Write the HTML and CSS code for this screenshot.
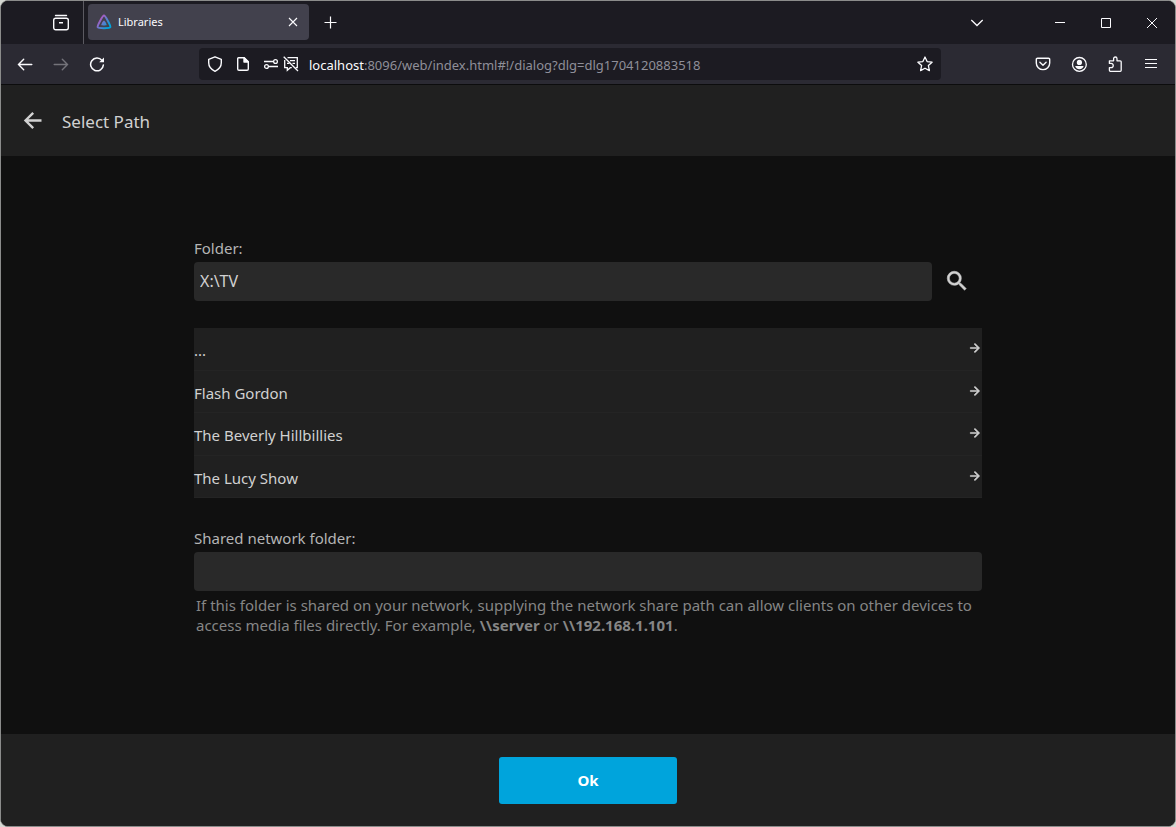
FILE: index.html
```html
<!DOCTYPE html>
<html lang="en">
<head>
<meta charset="utf-8">
<title>Libraries</title>
<link rel="stylesheet" href="styles.css">
</head>
<body>
<div class="window">
  <div class="tabbar">
    <button class="icon-btn firefox-view" aria-label="Recent browsing"><svg width="18" height="18" viewBox="0 0 18 18" fill="none" stroke="currentColor" stroke-width="1.4"><path d="M3.5 1.5h11" stroke-linecap="round"/><rect x="1.7" y="4.2" width="14.6" height="11.6" rx="2"/><path d="M7 8.700h4"/></svg></button>
    <div class="tab">
      <svg width="16" height="16" viewBox="0 0 16 16"><defs><linearGradient id="jelly" x1="4" y1="5" x2="13" y2="12" gradientUnits="userSpaceOnUse"><stop offset="0" stop-color="#aa5cc3"/><stop offset="1" stop-color="#00a4dc"/></linearGradient></defs><path d="M8 1.6C6.700 1.6 1 11.900 1.700 13.200c.6 1.300 12 1.300 12.600 0C15 11.900 9.300 1.600 8 1.600z" fill="none" stroke="url(#jelly)" stroke-width="2"/><path d="M8 6.500c-.8 0-3 4-2.700 4.600.3.600 5.100.600 5.400 0C11 10.500 8.800 6.500 8 6.500z" fill="url(#jelly)"/></svg>
      <span class="tab-title">Libraries</span>
      <button class="icon-btn" aria-label="Close tab"><svg width="10" height="10" viewBox="0 0 10 10" fill="none" stroke="currentColor" stroke-width="1.1"><path d="M1 1l8 8M9 1L1 9"/></svg></button>
    </div>
    <button class="icon-btn new-tab" aria-label="New tab"><svg width="13" height="13" viewBox="0 0 13 13" fill="none" stroke="currentColor" stroke-width="1.2"><path d="M6.500 .5v12M.5 6.500h12"/></svg></button>
    <div class="window-controls">
      <button class="icon-btn all-tabs" aria-label="List all tabs"><svg width="14" height="14" viewBox="0 0 14 14" fill="none" stroke="currentColor" stroke-width="1.3"><path d="M1.300 4L7 9.500 12.700 4"/></svg></button>
      <button class="icon-btn caption" aria-label="Minimize"><svg width="10" height="10" viewBox="0 0 10 10"><path d="M0 4h10v1H0z" fill="currentColor"/></svg></button>
      <button class="icon-btn caption" aria-label="Maximize"><svg width="10" height="10" viewBox="0 0 10 10"><path d="M.5.5h9v9h-9z" fill="none" stroke="currentColor"/></svg></button>
      <button class="icon-btn caption" aria-label="Close"><svg width="10" height="10" viewBox="0 0 10 10" fill="none" stroke="currentColor"><path d="M0 0l10 10M10 0L0 10"/></svg></button>
    </div>
  </div>

  <div class="navbar">
    <div class="nav-buttons">
      <button class="icon-btn" aria-label="Back"><svg width="16" height="16" viewBox="0 0 16 16" fill="none" stroke="currentColor" stroke-width="1.4" stroke-linecap="round"><path d="M14.800 8.500H1.500M6.700 3.300L1.500 8.500l5.200 5.200"/></svg></button>
      <button class="icon-btn" aria-label="Forward" disabled><svg width="16" height="16" viewBox="0 0 16 16" fill="none" stroke="currentColor" stroke-width="1.400" stroke-linecap="round"><path d="M1.200 8.500h13.300M9.300 3.300l5.200 5.200-5.200 5.200"/></svg></button>
      <button class="icon-btn" aria-label="Reload"><svg width="16" height="16" viewBox="0 0 16 16" fill="none" stroke="currentColor" stroke-width="1.500" stroke-linecap="round"><path d="M13 4.400a6.400 6.400 0 1 0 1.400 4.500"/><path d="M15 1.400v4.800h-4.800z" fill="currentColor" stroke="none"/></svg></button>
    </div>
    <div class="urlbar">
      <button class="icon-btn shield" aria-label="Tracking protection"><svg width="16" height="16" viewBox="0 0 16 16" fill="none" stroke="currentColor" stroke-width="1.400" stroke-linejoin="round"><path d="M8 .8l6.300 2.500v3.500c0 3.600-2.600 6.800-6.300 8.500-3.700-1.700-6.300-4.900-6.300-8.500V3.300z"/></svg></button>
      <button class="icon-btn page-info" aria-label="Site information"><svg width="16" height="16" viewBox="0 0 16 16" fill="none" stroke="currentColor" stroke-width="1.400" stroke-linejoin="round"><path d="M3.500 1.700h5.800l4 4v7.300a1.300 1.300 0 0 1-1.300 1.300H4A1.300 1.300 0 0 1 2.700 13V2.500a.8.8 0 0 1 .8-.8z"/><path d="M9 1.700V6h4.300z" fill="currentColor"/></svg></button>
      <button class="icon-btn permissions" aria-label="Permissions"><svg width="16" height="16" viewBox="0 0 16 16" fill="none" stroke="currentColor" stroke-width="1.300"><path d="M1 5.500h9M6 10.500h9"/><circle cx="12.500" cy="5.500" r="1.900"/><circle cx="3.500" cy="10.500" r="1.900"/></svg></button>
      <button class="icon-btn" aria-label="Notifications blocked"><svg width="16" height="16" viewBox="0 0 16 16" fill="none" stroke="currentColor" stroke-width="1.300"><path d="M4.500 1.700h9.800v10h-1.600M1.700 4v7.700h2.600v2.600l3-2.600h1.500M7 4.700h5M9.500 7.300H12M4 7.300h2.500"/><path d="M.7.7L15 15"/></svg></button>
      <div class="url"><span class="host">localhost</span>:8096/web/index.html#!/dialog?dlg=dlg1704120883518</div>
      <button class="icon-btn" aria-label="Bookmark this page"><svg width="16" height="16" viewBox="0 0 16 16" fill="none" stroke="currentColor" stroke-width="1.300" stroke-linejoin="round"><path d="M8 1l2.100 4.600 5 .6-3.700 3.400 1 5L8 12.200l-4.400 2.400 1-5L.9 6.200l5-.6z"/></svg></button>
    </div>
    <div class="toolbar-end">
      <button class="icon-btn" aria-label="Pocket"><svg width="16" height="16" viewBox="0 0 16 16" fill="none" stroke="currentColor" stroke-width="1.400" stroke-linecap="round" stroke-linejoin="round"><path d="M2.500 2.200h11a1.200 1.200 0 0 1 1.200 1.200v3.500a6.700 6.700 0 0 1-13.400 0V3.400a1.200 1.200 0 0 1 1.200-1.200zM4.900 6.300L8 9.300l3.100-3"/></svg></button>
      <button class="icon-btn" aria-label="Account"><svg width="16" height="16" viewBox="0 0 16 16"><circle cx="8.400" cy="8.400" r="6.900" fill="none" stroke="currentColor" stroke-width="1.300"/><circle cx="8.400" cy="6.400" r="2.600" fill="currentColor"/><path d="M4.200 10h8.400c-.3 1.900-2 3.200-4.200 3.200s-3.900-1.300-4.200-3.200z" fill="currentColor"/></svg></button>
      <button class="icon-btn" aria-label="Extensions"><svg width="16" height="16" viewBox="0 0 16 16" fill="none" stroke="currentColor" stroke-width="1.300" stroke-linejoin="round"><path d="M2.400 7.400V4.800h4.200V2.700a1.700 1.700 0 0 1 3.400 0v2.100h3.200a1 1 0 0 1 1 1v8.500a1 1 0 0 1-1 1H3.400a1 1 0 0 1-1-1v-2.600h1.700a2.100 2.100 0 0 0 0-4.300z"/></svg></button>
      <button class="icon-btn" aria-label="Menu"><svg width="16" height="16" viewBox="0 0 16 16" fill="none" stroke="currentColor" stroke-width="1.200"><path d="M2 3.500h12M2 7.500h12M2 11.500h12"/></svg></button>
    </div>
  </div>

  <header class="dialog-header">
    <button class="icon-btn back" aria-label="Back"><svg width="24" height="24" viewBox="0 0 24 24" fill="none" stroke="currentColor" stroke-width="2.400"><path d="M20.500 11.500H5M12.200 3.800L4.500 11.500l7.700 7.700"/></svg></button>
    <h1>Select Path</h1>
  </header>

  <main class="dialog-content">
    <form class="path-form" id="path-form">
      <label for="folder">Folder:</label>
      <div class="folder-row">
        <input type="text" id="folder" value="X:\TV">
        <button type="button" class="icon-btn search" aria-label="Refresh"><svg width="26" height="26" viewBox="0 0 24 24" fill="currentColor" stroke="currentColor" stroke-width=".5"><path d="M15.500 14h-.79l-.28-.27A6.471 6.471 0 0 0 16 9.500 6.500 6.500 0 1 0 9.500 16c1.610 0 3.090-.59 4.230-1.570l.27.28v.79l5 4.990L20.490 19l-4.990-5zm-6 0C7.010 14 5 11.990 5 9.500S7.010 5 9.500 5 14 7.010 14 9.500 11.990 14 9.500 14z"/></svg></button>
      </div>
      <div class="folder-list">
        <button type="button" class="folder-item"><span>...</span><svg class="arrow" width="14" height="14" viewBox="0 0 24 24"><path d="M12 4l-1.410 1.410L16.170 11H4v2h12.170l-5.580 5.590L12 20l8-8z"/></svg></button>
        <button type="button" class="folder-item"><span>Flash Gordon</span><svg class="arrow" width="14" height="14" viewBox="0 0 24 24"><path d="M12 4l-1.410 1.410L16.170 11H4v2h12.170l-5.580 5.590L12 20l8-8z"/></svg></button>
        <button type="button" class="folder-item"><span>The Beverly Hillbillies</span><svg class="arrow" width="14" height="14" viewBox="0 0 24 24"><path d="M12 4l-1.410 1.410L16.170 11H4v2h12.170l-5.580 5.590L12 20l8-8z"/></svg></button>
        <button type="button" class="folder-item"><span>The Lucy Show</span><svg class="arrow" width="14" height="14" viewBox="0 0 24 24"><path d="M12 4l-1.410 1.410L16.170 11H4v2h12.170l-5.580 5.590L12 20l8-8z"/></svg></button>
      </div>
      <label for="network">Shared network folder:</label>
      <input type="text" id="network" aria-describedby="network-help">
      <p class="help" id="network-help">If this folder is shared on your network, supplying the network share path can allow clients on other devices to access media files directly. For example, <b>\\server</b> or <b>\\192.168.1.101</b>.</p>
    </form>
  </main>

  <footer class="dialog-footer">
    <button type="submit" form="path-form" class="submit">Ok</button>
  </footer>
</div>
</body>
</html>
```
FILE: styles.css
```css
* { box-sizing: border-box; }
body {
  margin: 0;
  background: #d5d8d2;
  color: #d1d1d1;
  font-family: "Noto Sans", sans-serif;
  font-size: 15px;
}
button, input { font: inherit; color: inherit; }
button { border: 0; background: none; padding: 0; }
svg { display: block; flex: none; }

.window {
  display: flex;
  flex-direction: column;
  min-height: 100vh;
  border: 1px solid #8b8c8b;
  border-radius: 8px;
  background: #101010;
  overflow: hidden;
}
.icon-btn {
  display: flex;
  align-items: center;
  justify-content: center;
  flex: none;
}

.tabbar {
  display: flex;
  align-items: center;
  height: 43px;
  background: #1c1b22;
  color: #fbfbfe;
}
.firefox-view {
  width: 83px;
  height: 100%;
  padding-left: 38px;
  border-right: 1px solid #5b5a61;
}
.tab {
  display: flex;
  align-items: center;
  gap: 6px;
  width: 221px;
  height: 36px;
  margin-left: 4px;
  margin-bottom: 2px;
  padding: 0 11px 0 8px;
  border-radius: 4px;
  background: #42414d;
}
.tab-title { flex: 1; font: 11px "Noto Sans", sans-serif; }
.new-tab { margin-left: 15px; }
.window-controls { display: flex; margin-left: auto; }
.all-tabs { width: 60px; }
.caption { width: 46px; height: 30px; }
.all-tabs + .caption { margin-left: 30px; }

.navbar {
  display: flex;
  align-items: center;
  height: 41px;
  padding-right: 16px;
  border-bottom: 1px solid #0c0c0d;
  background: #2b2a33;
  color: #fbfbfe;
}
.nav-buttons { display: flex; gap: 20px; width: 198px; padding-left: 16px; flex: none; }
.nav-buttons button:disabled { color: #74737a; }
.urlbar {
  display: flex;
  align-items: center;
  flex: 1;
  max-width: 742px;
  height: 32px;
  padding: 0 8px;
  border-radius: 4px;
  background: #1c1b22;
}
.page-info { margin-left: 12px; }
.permissions { margin-left: 12px; margin-right: 4px; }
.url {
  flex: 1;
  margin-left: 10px;
  padding-top: 1px;
  color: #8f8f99;
  font: 13px "Noto Sans", sans-serif;
  white-space: nowrap;
}
.host { color: #fbfbfe; }
.toolbar-end { display: flex; gap: 20px; margin-left: auto; }

.dialog-header {
  display: flex;
  align-items: center;
  gap: 17px;
  height: 71px;
  padding-left: 20px;
  background: #202020;
}
.dialog-header h1 { margin: 0; padding-top: 2px; font-size: 17px; font-weight: 400; }

.dialog-content { flex: 1; padding: 82px 24px 24px; }
.path-form {
  display: flex;
  flex-direction: column;
  max-width: 788px;
  margin: 0 auto;
}
.path-form label { line-height: 20px; margin-bottom: 4px; color: #b5b5b5; }
.path-form input {
  width: 100%;
  height: 39px;
  padding: 0 6px 2px;
  border: 0;
  border-radius: 4px;
  background: #292929;
  font-size: 16px;
}
.folder-row { display: flex; align-items: center; }
.search { width: 50px; padding-bottom: 2px; }
.folder-list {
  display: grid;
  grid-auto-rows: 1fr;
  min-height: 170px;
  margin: 27px 0 30px;
  background: #202020;
}
.folder-item {
  display: flex;
  align-items: center;
  justify-content: space-between;
  padding-top: 3px;
  border-bottom: 1px solid #242424;
}
.arrow { margin-bottom: 4px; fill: currentColor; stroke: currentColor; }
.help { margin: 4px 2px 0; color: #868686; line-height: 20px; }

.dialog-footer {
  display: flex;
  align-items: center;
  justify-content: center;
  height: 92px;
  background: #202020;
}
.submit {
  width: 178px;
  height: 47px;
  border-radius: 3px;
  background: #00a4dc;
  color: #fff;
  font-weight: 700;
}
```
